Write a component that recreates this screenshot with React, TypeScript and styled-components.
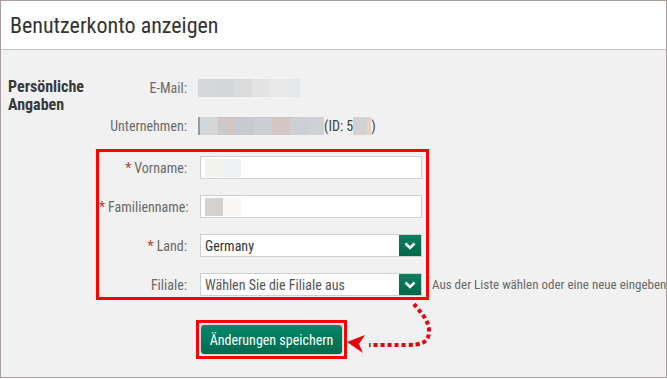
import React from 'react';
import styled, { createGlobalStyle } from 'styled-components';

const GlobalStyle = createGlobalStyle`
    html, body {
        margin: 0;
        padding: 0;
        background: #ffffff;
    }
    body {
        font-family: "Roboto Condensed", "Open Sans", "Liberation Sans", sans-serif;
        font-stretch: 75%;
    }
`;

const Frame = styled.div`
    position: relative;
    width: 667px;
    height: 378px;
    box-sizing: border-box;
    border: 1px solid #a89c9c;
    background: #f0f1f0;
    overflow: hidden;
`;

const Header = styled.div`
    height: 48px;
    background: #ffffff;
    border-bottom: 1px solid #c4c4c4;
    display: flex;
    align-items: center;
    padding-left: 9px;
`;

const Title = styled.h1`
    margin: 0;
    font-size: 22px;
    font-weight: normal;
    color: #333333;
`;

const Body = styled.div`
    display: flex;
    padding: 26px 0 0 7px;
`;

const SectionTitle = styled.div`
    width: 88px;
    font-size: 16px;
    font-weight: bold;
    line-height: 18px;
    color: #3a3a3a;
    padding-top: 2px;
`;

const FormColumn = styled.div`
    display: flex;
    flex-direction: column;
`;

const InfoRow = styled.div<{ $after: number }>`
    display: grid;
    grid-template-columns: 88px auto;
    column-gap: 11px;
    align-items: center;
    height: 23px;
    padding-left: 3px;
    margin-bottom: ${p => p.$after}px;
`;

const Label = styled.label`
    text-align: right;
    font-size: 14px;
    color: #6a6a6a;
    white-space: nowrap;
`;

const Required = styled.span`
    color: #c0392b;
    margin-right: 3px;
`;

const Blur = styled.span<{ $w: number; $c: string }>`
    display: inline-block;
    width: ${p => p.$w}px;
    height: 18px;
    background: ${p => p.$c};
    vertical-align: middle;
`;

const BlurGroup = styled.div`
    display: flex;
    align-items: center;
    font-size: 14px;
    color: #444;
`;

const Highlight = styled.div`
    box-sizing: border-box;
    width: 333px;
    border: 3px solid #ff0000;
    padding: 4px 3px 1px 0;
    display: flex;
    flex-direction: column;
    gap: 16px;
`;

const FieldRow = styled.div`
    display: grid;
    grid-template-columns: 88px 222px 0;
    column-gap: 13px;
    align-items: center;
    height: 23px;
`;

const TextInput = styled.div`
    box-sizing: border-box;
    height: 23px;
    background: #ffffff;
    border: 1px solid #cfcfcf;
    display: flex;
    align-items: center;
    padding-left: 4px;
`;

const Select = styled.div`
    box-sizing: border-box;
    height: 23px;
    background: #ffffff;
    border: 1px solid #cfcfcf;
    display: flex;
    align-items: stretch;
`;

const SelectText = styled.span<{ $muted?: boolean }>`
    flex: 1;
    display: flex;
    align-items: center;
    padding-left: 4px;
    font-size: 14px;
    white-space: nowrap;
    color: ${p => (p.$muted ? '#555555' : '#333333')};
`;

const SelectButton = styled.span`
    width: 22px;
    background: linear-gradient(#0a7f61, #00654b);
    display: flex;
    align-items: center;
    justify-content: center;
`;

const Hint = styled.span`
    margin-left: -3px;
    font-size: 13px;
    color: #6a6a6a;
    white-space: nowrap;
`;

const ButtonFrame = styled.div`
    margin: 20px 0 0 100px;
    width: 151px;
    box-sizing: border-box;
    border: 3px solid #ff0000;
    padding: 1px;
`;

const SaveButton = styled.button`
    width: 100%;
    height: 31px;
    border: 1px solid #cfd8d4;
    border-radius: 4px;
    background: linear-gradient(#05876a, #006a4f);
    color: #ffffff;
    font-family: inherit;
    font-stretch: inherit;
    font-size: 14px;
    white-space: nowrap;
    padding: 0;
    cursor: pointer;
`;

const Annotation = styled.svg`
    position: absolute;
    left: 0;
    top: 0;
    pointer-events: none;
`;

const Chevron = () => (
    <svg width="12" height="8" viewBox="0 0 12 8">
        <polyline points="1.5,1.5 6,6 10.5,1.5" fill="none" stroke="#ffffff" strokeWidth="2.6" />
    </svg>
);

const App: React.FC = () => (
    <Frame>
        <GlobalStyle />
        <Header>
            <Title>Benutzerkonto anzeigen</Title>
        </Header>
        <Body>
            <SectionTitle>Persönliche Angaben</SectionTitle>
            <FormColumn>
                <InfoRow $after={15}>
                    <Label>E-Mail:</Label>
                    <BlurGroup>
                        <Blur $w={18} $c="#d5d8da" />
                        <Blur $w={18} $c="#d4d6d8" />
                        <Blur $w={18} $c="#d9dbdc" />
                        <Blur $w={18} $c="#e2e3e2" />
                        <Blur $w={18} $c="#e8e9e8" />
                        <Blur $w={12} $c="#e4e8ea" />
                    </BlurGroup>
                </InfoRow>
                <InfoRow $after={12}>
                    <Label>Unternehmen:</Label>
                    <BlurGroup>
                        <Blur $w={2} $c="#9a9a9a" />
                        <Blur $w={18} $c="#d3d6d8" />
                        <Blur $w={18} $c="#cfc7c5" />
                        <Blur $w={18} $c="#c7cad1" />
                        <Blur $w={18} $c="#cbced5" />
                        <Blur $w={18} $c="#d3c6c3" />
                        <Blur $w={18} $c="#cdcfd2" />
                        <Blur $w={16} $c="#cfd0d8" />
                        <span>(ID: 5</span>
                        <Blur $w={14} $c="#d3d2d0" />
                        <Blur $w={4} $c="#e4d4c8" />
                        <span>)</span>
                    </BlurGroup>
                </InfoRow>
                <Highlight>
                    <FieldRow>
                        <Label><Required>*</Required>Vorname:</Label>
                        <TextInput>
                            <Blur $w={18} $c="#f2f3ea" />
                            <Blur $w={18} $c="#eef0f3" />
                        </TextInput>
                    </FieldRow>
                    <FieldRow>
                        <Label><Required>*</Required>Familienname:</Label>
                        <TextInput>
                            <Blur $w={18} $c="#d3d2cf" />
                            <Blur $w={18} $c="#f8f7f2" />
                        </TextInput>
                    </FieldRow>
                    <FieldRow>
                        <Label><Required>*</Required>Land:</Label>
                        <Select>
                            <SelectText>Germany</SelectText>
                            <SelectButton><Chevron /></SelectButton>
                        </Select>
                    </FieldRow>
                    <FieldRow>
                        <Label>Filiale:</Label>
                        <Select>
                            <SelectText $muted>Wählen Sie die Filiale aus</SelectText>
                            <SelectButton><Chevron /></SelectButton>
                        </Select>
                        <Hint>Aus der Liste wählen oder eine neue eingeben</Hint>
                    </FieldRow>
                </Highlight>
                <ButtonFrame>
                    <SaveButton>Änderungen speichern</SaveButton>
                </ButtonFrame>
            </FormColumn>
        </Body>
        <Annotation width="667" height="378" viewBox="0 0 667 378">
            <path
                d="M413 303 C418 310, 428 318, 428 330 C428 342, 420 344, 405 344 L368 344"
                fill="none"
                stroke="#e8000b"
                strokeWidth="4"
                strokeDasharray="4 3"
            />
            <polygon points="346,341 364,334 358,343 362,352" fill="#e8000b" />
        </Annotation>
    </Frame>
);

export default App;
